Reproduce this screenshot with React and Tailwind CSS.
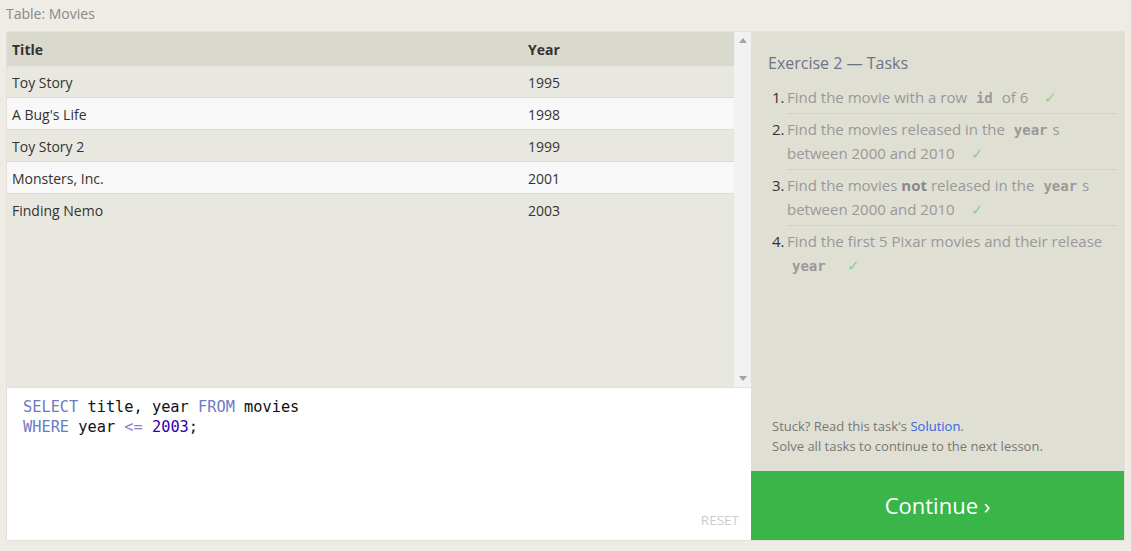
import React from 'react';

const movies = [
  { title: 'Toy Story', year: 1995 },
  { title: "A Bug's Life", year: 1998 },
  { title: 'Toy Story 2', year: 1999 },
  { title: 'Monsters, Inc.', year: 2001 },
  { title: 'Finding Nemo', year: 2003 },
];

const Code = ({ children }) => (
  <code className="font-['DejaVu_Sans_Mono',monospace] font-bold text-[14px] leading-none text-[#999] px-[5px]">{children}</code>
);

const Check = () => <span className="text-[#8fcf8f] ml-[12px]">✓</span>;

const tasks = [
  <>Find the movie with a row <Code>id</Code> of 6 <Check /></>,
  <>Find the movies released in the <Code>year</Code>s between 2000 and 2010 <Check /></>,
  <>Find the movies <b className="text-[#888]">not</b> released in the <Code>year</Code>s between 2000 and 2010 <Check /></>,
  <>Find the first 5 Pixar movies and their release <Code>year</Code> <Check /></>,
];

const App = () => {
  return (
    <div className="w-[1131px] h-[551px] bg-[#efece5] px-[6px] font-['Open_Sans',sans-serif]">
      <div className="h-[31px] pt-[3px] text-[14px] text-[#888]">Table: Movies</div>

      <div className="flex border border-[#e4e1d8] h-[510px]">
        {/* Left: table + editor */}
        <div className="w-[744px] flex flex-col">
          <div className="h-[355px] flex bg-[#e9e8e0]">
            <div className="flex-1">
              <div className="flex h-[34px] items-center bg-[#dad9cd] text-[14px] font-bold text-[#333]">
                <div className="w-[521px] pl-[5px]">Title</div>
                <div>Year</div>
              </div>
              {movies.map((m, i) => (
                <div
                  key={m.title}
                  className={`flex h-[32px] items-center pt-[1px] text-[14px] text-[#333] ${i < movies.length - 1 ? 'border-b border-[#dddcd3]' : ''} ${i % 2 === 1 ? 'bg-[#f8f8f8]' : 'bg-[#e9e8e0]'}`}
                >
                  <div className="w-[521px] pl-[5px]">{m.title}</div>
                  <div>{m.year}</div>
                </div>
              ))}
            </div>
            <div className="w-[17px] bg-[#f1f1f1] flex flex-col justify-between items-center py-[6px]">
              <svg width="8" height="5" viewBox="0 0 8 5"><path d="M0 5 L4 0 L8 5 Z" fill="#a3a3a3" /></svg>
              <svg width="8" height="5" viewBox="0 0 8 5"><path d="M0 0 L4 5 L8 0 Z" fill="#a3a3a3" /></svg>
            </div>
          </div>
          <div className="flex-1 bg-white border-t border-[#e4e1d8] flex flex-col pl-[16px] pr-[12px] pt-[9px] pb-[10px]">
            <pre className="font-['DejaVu_Sans_Mono',monospace] text-[15.3px] leading-[20px] text-[#111]">
              <span className="text-[#6c7bc4]">SELECT</span> title, year <span className="text-[#6c7bc4]">FROM</span> movies{'\n'}
              <span className="text-[#6c7bc4]">WHERE</span> year <span className="text-[#8a7fd0]">&lt;=</span> <span className="text-[#3300aa]">2003</span>;
            </pre>
            <div className="mt-auto self-end text-[13.5px] text-[#ccc]">RESET</div>
          </div>
        </div>

        {/* Right: tasks */}
        <div className="flex-1 flex flex-col">
          <div className="flex-1 bg-[#e0dfd4] pl-[17px] pr-[7px] pt-[19px] flex flex-col">
            <div className="text-[16px] text-[#6d7386]">Exercise 2 — Tasks</div>
            <ol className="mt-[7px] pl-[4px]">
              {tasks.map((t, i) => (
                <li key={i} className="flex text-[15px] leading-[24px]">
                  <span className="w-[15px] pt-[3px] text-[#333]">{i + 1}.</span>
                  <div className={`flex-1 text-[#999] pt-[3px] pb-[4px] ${i < 3 ? 'border-b border-[#d3d2c7]' : ''}`}>{t}</div>
                </li>
              ))}
            </ol>
            <div className="mt-auto pl-[4px] pb-[15px] text-[13px] leading-[20px] text-[#777]">
              <div>Stuck? Read this task's <span className="text-[#3366dd]">Solution</span>.</div>
              <div>Solve all tasks to continue to the next lesson.</div>
            </div>
          </div>
          <div className="h-[69px] bg-[#3ab54a] flex items-center justify-center text-white text-[22px]">
            Continue ›
          </div>
        </div>
      </div>
    </div>
  );
};

export default App;
